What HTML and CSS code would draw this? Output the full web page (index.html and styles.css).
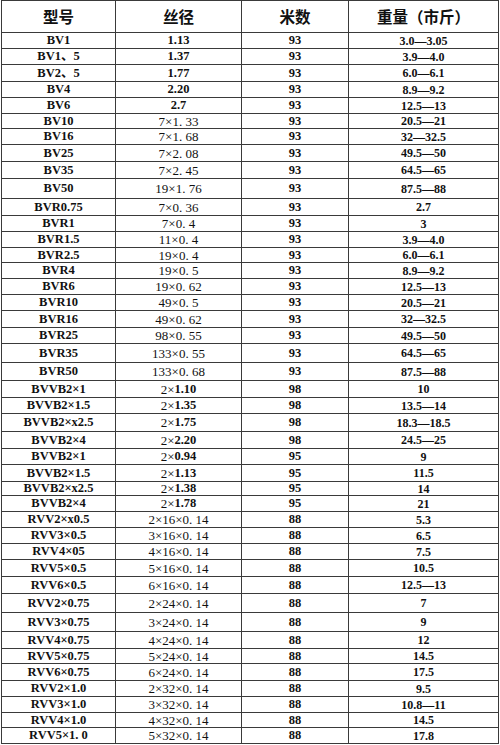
FILE: index.html
```html
<!DOCTYPE html>
<html lang="zh">
<head>
<meta charset="utf-8">
<title>电线规格表</title>
<link rel="stylesheet" href="styles.css">
</head>
<body>
<div class="sheet">
  <div class="row head"><div class="c">型号</div><div class="c">丝径</div><div class="c">米数</div><div class="c">重量（市斤）</div></div>
  <div class="row h16"><div class="c">BV1</div><div class="c"><b>1.13</b></div><div class="c">93</div><div class="c">3.0—3.05</div></div>
  <div class="row h16"><div class="c">BV1、5</div><div class="c"><b>1.37</b></div><div class="c">93</div><div class="c">3.9—4.0</div></div>
  <div class="row h17"><div class="c">BV2、5</div><div class="c"><b>1.77</b></div><div class="c">93</div><div class="c">6.0—6.1</div></div>
  <div class="row h16"><div class="c">BV4</div><div class="c"><b>2.20</b></div><div class="c">93</div><div class="c">8.9—9.2</div></div>
  <div class="row h16"><div class="c">BV6</div><div class="c"><b>2.7</b></div><div class="c">93</div><div class="c">12.5—13</div></div>
  <div class="row h15"><div class="c">BV10</div><div class="c">7×1. 33</div><div class="c">93</div><div class="c">20.5—21</div></div>
  <div class="row h16"><div class="c">BV16</div><div class="c">7×1. 68</div><div class="c">93</div><div class="c">32—32.5</div></div>
  <div class="row h17"><div class="c">BV25</div><div class="c">7×2. 08</div><div class="c">93</div><div class="c">49.5—50</div></div>
  <div class="row h17"><div class="c">BV35</div><div class="c">7×2. 45</div><div class="c">93</div><div class="c">64.5—65</div></div>
  <div class="row h20"><div class="c">BV50</div><div class="c">19×1. 76</div><div class="c">93</div><div class="c">87.5—88</div></div>
  <div class="row h17"><div class="c">BVR0.75</div><div class="c">7×0. 36</div><div class="c">93</div><div class="c">2.7</div></div>
  <div class="row h16"><div class="c">BVR1</div><div class="c">7×0. 4</div><div class="c">93</div><div class="c">3</div></div>
  <div class="row h16"><div class="c">BVR1.5</div><div class="c">11×0. 4</div><div class="c">93</div><div class="c">3.9—4.0</div></div>
  <div class="row h15"><div class="c">BVR2.5</div><div class="c">19×0. 4</div><div class="c">93</div><div class="c">6.0—6.1</div></div>
  <div class="row h16"><div class="c">BVR4</div><div class="c">19×0. 5</div><div class="c">93</div><div class="c">8.9—9.2</div></div>
  <div class="row h16"><div class="c">BVR6</div><div class="c">19×0. 62</div><div class="c">93</div><div class="c">12.5—13</div></div>
  <div class="row h16"><div class="c">BVR10</div><div class="c">49×0. 5</div><div class="c">93</div><div class="c">20.5—21</div></div>
  <div class="row h17"><div class="c">BVR16</div><div class="c">49×0. 62</div><div class="c">93</div><div class="c">32—32.5</div></div>
  <div class="row h16"><div class="c">BVR25</div><div class="c">98×0. 55</div><div class="c">93</div><div class="c">49.5—50</div></div>
  <div class="row h19"><div class="c">BVR35</div><div class="c">133×0. 55</div><div class="c">93</div><div class="c">64.5—65</div></div>
  <div class="row h18"><div class="c">BVR50</div><div class="c">133×0. 68</div><div class="c">93</div><div class="c">87.5—88</div></div>
  <div class="row h17"><div class="c">BVVB2×1</div><div class="c">2×<b>1.10</b></div><div class="c">98</div><div class="c">10</div></div>
  <div class="row h16"><div class="c">BVVB2×1.5</div><div class="c">2×<b>1.35</b></div><div class="c">98</div><div class="c">13.5—14</div></div>
  <div class="row h18"><div class="c">BVVB2×x2.5</div><div class="c">2×<b>1.75</b></div><div class="c">98</div><div class="c">18.3—18.5</div></div>
  <div class="row h17"><div class="c">BVVB2×4</div><div class="c">2×<b>2.20</b></div><div class="c">98</div><div class="c">24.5—25</div></div>
  <div class="row h16"><div class="c">BVVB2×1</div><div class="c">2×<b>0.94</b></div><div class="c">95</div><div class="c">9</div></div>
  <div class="row h17"><div class="c">BVVB2×1.5</div><div class="c">2×<b>1.13</b></div><div class="c">95</div><div class="c">11.5</div></div>
  <div class="row h14"><div class="c">BVVB2×x2.5</div><div class="c">2×<b>1.38</b></div><div class="c">95</div><div class="c">14</div></div>
  <div class="row h16"><div class="c">BVVB2×4</div><div class="c">2×<b>1.78</b></div><div class="c">95</div><div class="c">21</div></div>
  <div class="row h16"><div class="c">RVV2×x0.5</div><div class="c">2×16×0. 14</div><div class="c">88</div><div class="c">5.3</div></div>
  <div class="row h16"><div class="c">RVV3×0.5</div><div class="c">3×16×0. 14</div><div class="c">88</div><div class="c">6.5</div></div>
  <div class="row h16"><div class="c">RVV4×05</div><div class="c">4×16×0. 14</div><div class="c">88</div><div class="c">7.5</div></div>
  <div class="row h17"><div class="c">RVV5×0.5</div><div class="c">5×16×0. 14</div><div class="c">88</div><div class="c">10.5</div></div>
  <div class="row h17"><div class="c">RVV6×0.5</div><div class="c">6×16×0. 14</div><div class="c">88</div><div class="c">12.5—13</div></div>
  <div class="row h19"><div class="c">RVV2×0.75</div><div class="c">2×24×0. 14</div><div class="c">88</div><div class="c">7</div></div>
  <div class="row h19"><div class="c">RVV3×0.75</div><div class="c">3×24×0. 14</div><div class="c">88</div><div class="c">9</div></div>
  <div class="row h17"><div class="c">RVV4×0.75</div><div class="c">4×24×0. 14</div><div class="c">88</div><div class="c">12</div></div>
  <div class="row h15"><div class="c">RVV5×0.75</div><div class="c">5×24×0. 14</div><div class="c">88</div><div class="c">14.5</div></div>
  <div class="row h17"><div class="c">RVV6×0.75</div><div class="c">6×24×0. 14</div><div class="c">88</div><div class="c">17.5</div></div>
  <div class="row h16"><div class="c">RVV2×1.0</div><div class="c">2×32×0. 14</div><div class="c">88</div><div class="c">9.5</div></div>
  <div class="row h16"><div class="c">RVV3×1.0</div><div class="c">3×32×0. 14</div><div class="c">88</div><div class="c">10.8—11</div></div>
  <div class="row h15"><div class="c">RVV4×1.0</div><div class="c">4×32×0. 14</div><div class="c">88</div><div class="c">14.5</div></div>
  <div class="row h16"><div class="c">RVV5×1. 0</div><div class="c">5×32×0. 14</div><div class="c">88</div><div class="c">17.8</div></div>
</div>
</body>
</html>
```

FILE: styles.css
```css
html, body {
  margin: 0;
  padding: 0;
  background: #ffffff;
}

.sheet {
  margin-left: 1px;
  width: 497px;
  border-left: 1px solid #3a3a3a;
  border-top: 1px solid #3a3a3a;
  font-family: "Liberation Serif", "Noto Sans CJK SC", serif;
  color: #111;
}

.row {
  display: grid;
  grid-template-columns: 114px 126px 107px 150px;
  box-sizing: border-box;
  border-bottom: 1px solid #3a3a3a;
  height: 16px;
}

.c {
  display: flex;
  align-items: center;
  justify-content: center;
  border-right: 1px solid #3a3a3a;
  font-size: 12.5px;
  font-weight: 700;
  line-height: 1;
  white-space: nowrap;
  overflow: hidden;
}

.c:nth-child(2) {
  font-weight: 400;
  font-size: 13px;
}

.c b {
  font-weight: 700;
  font-size: 12.5px;
}

.c:nth-child(4) {
  font-size: 12px;
}

.head {
  height: 32px;
}

.head .c,
.head .c:nth-child(2),
.head .c:nth-child(4) {
  font-family: "Noto Sans CJK SC", sans-serif;
  font-weight: 700;
  font-size: 15.5px;
}

.h14 { height: 14px; }
.h15 { height: 15px; }
.h16 { height: 16px; }
.h17 { height: 17px; }
.h18 { height: 18px; }
.h19 { height: 19px; }
.h20 { height: 20px; }
```
